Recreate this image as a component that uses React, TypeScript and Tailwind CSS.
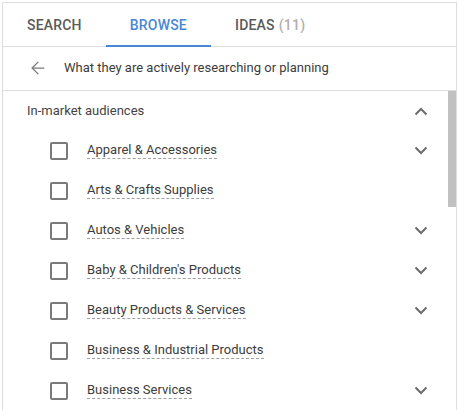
import { ArrowLeft } from 'lucide-react';

const items = [
  { label: 'Apparel & Accessories', expandable: true },
  { label: 'Arts & Crafts Supplies', expandable: false },
  { label: 'Autos & Vehicles', expandable: true },
  { label: "Baby & Children's Products", expandable: true },
  { label: 'Beauty Products & Services', expandable: true },
  { label: 'Business & Industrial Products', expandable: false },
  { label: 'Business Services', expandable: true },
];

function Chevron({ up = false }: { up?: boolean }) {
  return (
    <svg width="14" height="9" viewBox="0 0 14 9" className={up ? 'rotate-180' : ''}>
      <path d="M1.5 1.5 L7 7 L12.5 1.5" fill="none" stroke="#6b6b6b" strokeWidth="2" />
    </svg>
  );
}

export default function App() {
  return (
    <div className="h-[410px] w-[459px] overflow-hidden bg-white pl-[2px] pt-[2px] font-['Roboto',sans-serif]">
      <div className="flex h-[420px] w-[455px] flex-col border border-[#dedede]">
        {/* Tabs */}
        <div className="flex h-[44px] border-b border-[#dedede] text-[14px] font-medium tracking-[0.2px]">
          <div className="flex items-center px-6 pt-[1px] text-[#5a5a5a]">SEARCH</div>
          <div className="relative flex items-center px-6 pt-[1px] text-[#4a86d6]">
            BROWSE
            <div className="absolute bottom-[-1px] left-0 right-0 h-[2px] bg-[#4a86d6]" />
          </div>
          <div className="flex items-center px-6 pt-[1px] text-[#5a5a5a]">
            IDEAS<span className="ml-1 text-[#b0b0b0]">(11)</span>
          </div>
        </div>

        {/* Breadcrumb */}
        <div className="flex h-[44px] items-center border-b border-[#dedede] pb-[1px] pl-[25px] text-[13px] text-[#3c3c3c]">
          <ArrowLeft className="h-[20px] w-[20px] text-[#7a7a7a]" strokeWidth={1.5} />
          <span className="ml-4">What they are actively researching or planning</span>
        </div>

        {/* List */}
        <div className="flex flex-1">
          <div className="flex-1">
            <div className="flex h-[40px] items-center justify-between pl-6 pr-[20px] text-[13px] text-[#444]">
              <span>In-market audiences</span>
              <Chevron up />
            </div>
            {items.map((item) => (
              <div key={item.label} className="flex h-[40px] items-center pb-[1px] pl-[47px] pr-[20px]">
                <div className="h-[18px] w-[18px] rounded-[2px] border-2 border-[#7a7a7a]" />
                <span className="ml-[19px] border-b border-dashed border-[#a0a0a0] text-[13px] leading-[16px] text-[#3c3c3c]">
                  {item.label}
                </span>
                <div className="ml-auto">{item.expandable && <Chevron />}</div>
              </div>
            ))}
          </div>
          <div className="w-[8px]">
            <div className="h-[116px] w-[8px] bg-[#c1c1c1]" />
          </div>
        </div>
      </div>
    </div>
  );
}
